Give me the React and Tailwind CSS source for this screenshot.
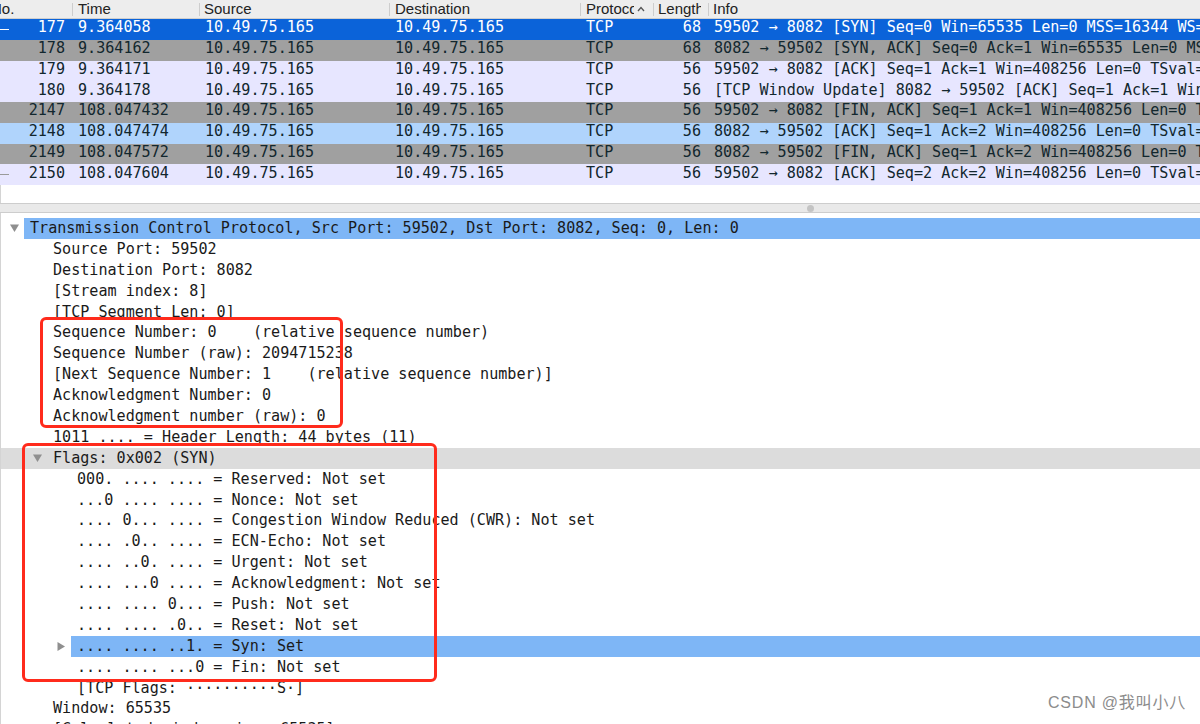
import React from "react";

const MONO = "font-['DejaVu_Sans_Mono',monospace]";

const packets = [
  { no: "177", time: "9.364058", len: "68", info: "59502 → 8082 [SYN] Seq=0 Win=65535 Len=0 MSS=16344 WS=64 TSval=3781936473 TSecr=0 SACK_PERM", cls: "bg-[#0b63d9] text-white", marker: "bg-white" },
  { no: "178", time: "9.364162", len: "68", info: "8082 → 59502 [SYN, ACK] Seq=0 Ack=1 Win=65535 Len=0 MSS=16344 WS=64 TSval=1234", cls: "bg-[#a0a0a0] text-[#12272e]", marker: "" },
  { no: "179", time: "9.364171", len: "56", info: "59502 → 8082 [ACK] Seq=1 Ack=1 Win=408256 Len=0 TSval=3781936473 TSecr=1234", cls: "bg-[#e7e6ff] text-[#12272e]", marker: "" },
  { no: "180", time: "9.364178", len: "56", info: "[TCP Window Update] 8082 → 59502 [ACK] Seq=1 Ack=1 Win=408256 Len=0 TSval=1234", cls: "bg-[#e7e6ff] text-[#12272e]", marker: "" },
  { no: "2147", time: "108.047432", len: "56", info: "59502 → 8082 [FIN, ACK] Seq=1 Ack=1 Win=408256 Len=0 TSval=3782035123 TSecr=1", cls: "bg-[#a0a0a0] text-[#12272e]", marker: "" },
  { no: "2148", time: "108.047474", len: "56", info: "8082 → 59502 [ACK] Seq=1 Ack=2 Win=408256 Len=0 TSval=3782035123 TSecr=1", cls: "bg-[#b0d4fc] text-[#12272e]", marker: "" },
  { no: "2149", time: "108.047572", len: "56", info: "8082 → 59502 [FIN, ACK] Seq=1 Ack=2 Win=408256 Len=0 TSval=3782035123 TSecr=1", cls: "bg-[#a0a0a0] text-[#12272e]", marker: "" },
  { no: "2150", time: "108.047604", len: "56", info: "59502 → 8082 [ACK] Seq=2 Ack=2 Win=408256 Len=0 TSval=3782035123 TSecr=1", cls: "bg-[#e7e6ff] text-[#12272e]", marker: "bg-[#9a9a9a]" },
];

const details = [
  { lvl: 0, arrow: "down", hl: true, text: "Transmission Control Protocol, Src Port: 59502, Dst Port: 8082, Seq: 0, Len: 0" },
  { lvl: 1, text: "Source Port: 59502" },
  { lvl: 1, text: "Destination Port: 8082" },
  { lvl: 1, text: "[Stream index: 8]" },
  { lvl: 1, text: "[TCP Segment Len: 0]" },
  { lvl: 1, text: "Sequence Number: 0    (relative sequence number)" },
  { lvl: 1, text: "Sequence Number (raw): 2094715238" },
  { lvl: 1, text: "[Next Sequence Number: 1    (relative sequence number)]" },
  { lvl: 1, text: "Acknowledgment Number: 0" },
  { lvl: 1, text: "Acknowledgment number (raw): 0" },
  { lvl: 1, text: "1011 .... = Header Length: 44 bytes (11)" },
  { lvl: 1, arrow: "down", gray: true, text: "Flags: 0x002 (SYN)" },
  { lvl: 2, text: "000. .... .... = Reserved: Not set" },
  { lvl: 2, text: "...0 .... .... = Nonce: Not set" },
  { lvl: 2, text: ".... 0... .... = Congestion Window Reduced (CWR): Not set" },
  { lvl: 2, text: ".... .0.. .... = ECN-Echo: Not set" },
  { lvl: 2, text: ".... ..0. .... = Urgent: Not set" },
  { lvl: 2, text: ".... ...0 .... = Acknowledgment: Not set" },
  { lvl: 2, text: ".... .... 0... = Push: Not set" },
  { lvl: 2, text: ".... .... .0.. = Reset: Not set" },
  { lvl: 2, arrow: "right", hl: true, text: ".... .... ..1. = Syn: Set" },
  { lvl: 2, text: ".... .... ...0 = Fin: Not set" },
  { lvl: 2, text: "[TCP Flags: ··········S·]" },
  { lvl: 1, text: "Window: 65535" },
  { lvl: 1, text: "[Calculated window size: 65535]" },
];

const leftCls = ["w-[23px] pl-[9px]", "w-[46px] pl-[32px]", "w-[70px] pl-[56px]"];

function Arrow({ dir }) {
  if (dir === "down")
    return (
      <svg width="9" height="8" viewBox="0 0 9 8" className="block">
        <polygon points="0,0.5 9,0.5 4.5,8" fill="#8f8f8f" />
      </svg>
    );
  return (
    <svg width="8" height="9" viewBox="0 0 8 9" className="block">
      <polygon points="0.5,0 8,4.5 0.5,9" fill="#8f8f8f" />
    </svg>
  );
}

function HeaderCell({ children, sep = true }) {
  return (
    <div className="flex items-center h-[18px] overflow-hidden">
      {sep && <div className="w-px h-[13px] bg-[#cdcdcd] shrink-0" />}
      {children}
    </div>
  );
}

export default function App() {
  const grid = "grid grid-cols-[72px_127px_190px_191px_73px_55px_1fr]";
  return (
    <div className="relative w-[1200px] h-[724px] overflow-hidden bg-white">
      {/* Packet list header */}
      <div className={`${grid} bg-[#ededed] border-b border-[#cfcfcf] text-[15px] leading-[16px] text-[#222] font-['Liberation_Sans',Arial,sans-serif]`}>
        <HeaderCell sep={false}>
          <span className="ml-[-9px] whitespace-nowrap">No.</span>
        </HeaderCell>
        <HeaderCell>
          <span className="ml-[5px]">Time</span>
        </HeaderCell>
        <HeaderCell>
          <span className="ml-[4px]">Source</span>
        </HeaderCell>
        <HeaderCell>
          <span className="ml-[5px]">Destination</span>
        </HeaderCell>
        <HeaderCell>
          <span className="ml-[5px] w-[48px] overflow-hidden whitespace-nowrap">Protocol</span>
          <svg width="8" height="6" viewBox="0 0 8 6" className="ml-[3px] shrink-0">
            <polyline points="1,5 4,1.5 7,5" fill="none" stroke="#555" strokeWidth="1.3" />
          </svg>
        </HeaderCell>
        <HeaderCell>
          <span className="ml-[4px] w-[43px] overflow-hidden whitespace-nowrap">Length</span>
        </HeaderCell>
        <HeaderCell>
          <span className="ml-[4px]">Info</span>
        </HeaderCell>
      </div>

      {/* Packet rows */}
      <div className={`${MONO} text-[15.1px] leading-[17px]`}>
        {packets.map((p) => (
          <div key={p.no} className={`${grid} h-[20.75px] ${p.cls}`}>
            <div className="flex items-center pb-[3px] pr-[7px]">
              <div className={`w-[9px] h-px mt-[3px] ${p.marker}`} />
              <div className="flex-1 text-right">{p.no}</div>
            </div>
            <div className="flex items-center pb-[3px] pl-[6px] whitespace-nowrap overflow-hidden">{p.time}</div>
            <div className="flex items-center pb-[3px] pl-[6px] whitespace-nowrap overflow-hidden">10.49.75.165</div>
            <div className="flex items-center pb-[3px] pl-[6px] whitespace-nowrap overflow-hidden">10.49.75.165</div>
            <div className="flex items-center pb-[3px] pl-[6px] whitespace-nowrap overflow-hidden">TCP</div>
            <div className="flex items-center justify-end pb-[3px] pr-[7px]">{p.len}</div>
            <div className="flex items-center pb-[3px] pl-[6px] whitespace-nowrap overflow-hidden">{p.info}</div>
          </div>
        ))}
      </div>

      {/* empty area of packet list */}
      <div className="h-[18px] border-l border-[#d4d4d4]" />

      {/* splitter */}
      <div className="h-[10px] bg-[#e9e9e9] border-y border-[#cdcdcd] flex items-center pl-[807px]">
        <div className="w-[7px] h-[7px] rounded-full bg-[#c4c4c4]" />
      </div>

      {/* Packet details */}
      <div className={`border-l border-[#d4d4d4] pt-[5px] ${MONO} text-[15.1px] leading-[21px] text-[#1a1a1a]`}>
        {details.map((d, i) => (
          <div key={i} className={`flex h-[20.9px] ${d.gray ? "bg-[#dcdcdc]" : ""}`}>
            <div className={`${leftCls[d.lvl]} shrink-0 flex items-center`}>
              {d.arrow && <Arrow dir={d.arrow} />}
            </div>
            <div className={`flex-1 pl-[6px] whitespace-pre overflow-hidden ${d.hl ? "bg-[#7eb6f6]" : ""}`}>
              {d.text}
            </div>
          </div>
        ))}
      </div>

      {/* Annotation boxes */}
      <div className="absolute left-[40px] top-[317px] w-[303px] h-[111px] border-[3px] border-[#ff2b1c] rounded-[6px]" />
      <div className="absolute left-[22px] top-[443px] w-[415px] h-[239px] border-[3px] border-[#ff2b1c] rounded-[6px]" />

      {/* Watermark */}
      <div className="absolute left-[1048px] top-[693px] text-[16px] leading-[20px] tracking-[0.8px] text-[#8c8c8c] whitespace-nowrap font-['Liberation_Sans','Noto_Sans_CJK_SC',sans-serif]">
        CSDN @我叫小八
      </div>
    </div>
  );
}
